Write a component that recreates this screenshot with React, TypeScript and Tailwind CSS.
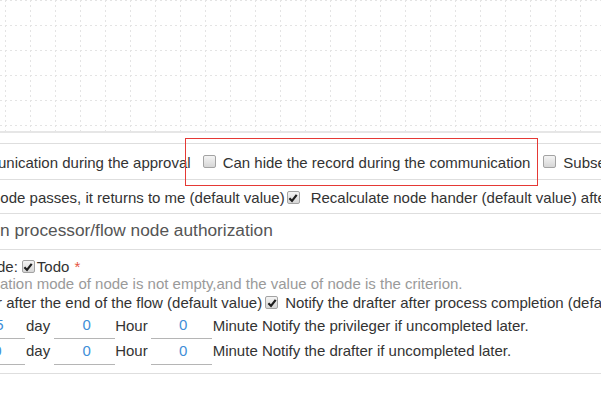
import type { ReactNode } from "react";

function CheckBox({ checked }: { checked?: boolean }) {
  return (
    <span className="inline-flex h-[13px] w-[13px] shrink-0 items-center justify-center rounded-[2px] border border-[#a3a3a3] bg-gradient-to-b from-[#f4f4f4] to-[#d6d6d6]">
      {checked && (
        <svg width="10" height="10" viewBox="0 0 10 10">
          <path d="M1.4 5.2 L4 7.9 L8.7 1.8" fill="none" stroke="#1f1f1f" strokeWidth="2.2" />
        </svg>
      )}
    </span>
  );
}

function Num({ value, className }: { value: string; className: string }) {
  return (
    <span
      className={
        "inline-flex h-[26px] w-[61px] shrink-0 items-center justify-center border-b border-[#b5b5b5] text-[#3f8fd8] " +
        className
      }
    >
      {value}
    </span>
  );
}

function Row({ children, className }: { children: ReactNode; className?: string }) {
  return (
    <div className={"flex items-center whitespace-nowrap border-t border-[#dedede] " + (className ?? "")}>
      {children}
    </div>
  );
}

function GridCanvas() {
  return (
    <svg width="601" height="131" className="block">
      <defs>
        <pattern id="dash-grid" width="25" height="25" x="5" y="0" patternUnits="userSpaceOnUse">
          <path d="M0 0.5 H25" stroke="#e4e4e4" strokeDasharray="2 3" />
          <path d="M0.5 0 V25" stroke="#e4e4e4" strokeDasharray="2 3" />
        </pattern>
      </defs>
      <rect width="601" height="131" fill="url(#dash-grid)" />
    </svg>
  );
}

export default function App() {
  return (
    <div className="relative h-[401px] w-[601px] overflow-hidden bg-white font-['Liberation_Sans',Arial,sans-serif] text-[15px] text-[#333]">
      <GridCanvas />
      <div className="h-[2px] bg-[#e6e6e6]" />
      <div className="h-[10px]" />

      <Row className="h-[36px] pt-[4px]">
        <span className="-ml-[2px]">unication during the approval</span>
        <span className="ml-[12px]">
          <CheckBox />
        </span>
        <span className="ml-[7px]">Can hide the record during the communication</span>
        <span className="ml-[13px]">
          <CheckBox />
        </span>
        <span className="ml-[7px]">Subsequent</span>
      </Row>

      <Row className="h-[34px] pt-[3px]">
        <span className="-ml-[8px]">node passes, it returns to me (default value)</span>
        <span className="ml-[2px]">
          <CheckBox checked />
        </span>
        <span className="ml-[11px]">Recalculate node hander (default value) after</span>
      </Row>

      <Row className="h-[36px] pb-[2px]">
        <span className="text-[17.3px] text-[#555]">n processor/flow node authorization</span>
      </Row>

      <div className="flex flex-col whitespace-nowrap border-t border-b border-[#dedede] pt-[8px] pb-[9px]">
        <div className="flex h-[18px] items-center">
          <span className="-ml-[3px]">de:</span>
          <span className="ml-[4px]">
            <CheckBox checked />
          </span>
          <span className="ml-[2px]">Todo</span>
          <span className="ml-[5px] text-[#e5533d]">*</span>
        </div>
        <div className="flex h-[17px] items-center text-[#9a9a9a]">
          ation mode of node is not empty,and the value of node is the criterion.
        </div>
        <div className="flex h-[20px] items-center">
          <span className="-ml-[3px]">r after the end of the flow (default value)</span>
          <span className="ml-[3px]">
            <CheckBox checked />
          </span>
          <span className="ml-[7px]">Notify the drafter after process completion (default value)</span>
        </div>
        <div className="flex h-[26px] items-center">
          <Num value="5" className="-ml-[36px] pl-[10px]" />
          <span className="ml-[1px]">day</span>
          <Num value="0" className="ml-[4px] pl-[4px]" />
          <span>Hour</span>
          <Num value="0" className="ml-[3px] pl-[4px]" />
          <span className="ml-[1px]">Minute Notify the privileger if uncompleted later.</span>
        </div>
        <div className="flex h-[25px] items-center">
          <Num value="0" className="-ml-[36px] pl-[6px]" />
          <span className="ml-[1px]">day</span>
          <Num value="0" className="ml-[4px] pl-[4px]" />
          <span>Hour</span>
          <Num value="0" className="ml-[3px] pl-[4px]" />
          <span className="ml-[1px]">Minute Notify the drafter if uncompleted later.</span>
        </div>
      </div>

      <div className="pointer-events-none absolute left-[185px] top-[138px] h-[48px] w-[353px] border border-[#e53935]" />
    </div>
  );
}
